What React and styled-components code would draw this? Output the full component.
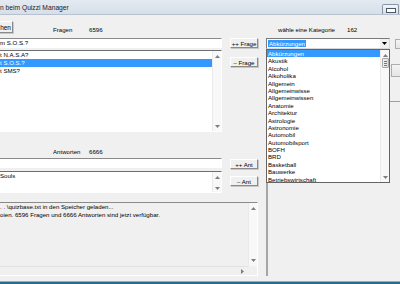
import React from 'react';
import styled, { createGlobalStyle, css } from 'styled-components';

const GlobalStyle = createGlobalStyle`
  html, body { margin: 0; padding: 0; background: #f0f0f0; }
  body { font-family: "Liberation Sans", Arial, sans-serif; }
  * { box-sizing: border-box; }
`;

const sunken = css`
  border: 1px solid;
  border-color: #8a8a8a #ffffff #ffffff #8a8a8a;
`;

const raised = css`
  border: 1px solid;
  border-color: #ffffff #8a8a8a #8a8a8a #ffffff;
  box-shadow: 1px 1px 0 #c8c8c8;
`;

const Window = styled.div`
  width: 400px;
  height: 284px;
  overflow: hidden;
  display: flex;
  flex-direction: column;
  background: #f0f0f0;
  color: #000;
  font-size: 6.1px;
`;

const TitleBar = styled.div`
  height: 15px;
  flex: none;
  display: flex;
  justify-content: space-between;
  align-items: flex-start;
  background: linear-gradient(#e4eaf1, #d6dfe9);
  border-bottom: 1px solid #b7c2ce;
`;

const Title = styled.div`
  font-size: 6.7px;
  line-height: 15px;
  color: #1a1a1a;
  white-space: nowrap;
`;

const MinButton = styled.div`
  margin-top: 4px;
  margin-right: 1px;
  width: 17px;
  height: 10px;
  border: 1px solid #8895a4;
  border-bottom: none;
  border-radius: 2px 2px 0 0;
  background: linear-gradient(#f2f5f8, #d7dee6);
  display: flex;
  align-items: center;
  justify-content: center;
  &::after {
    content: "";
    width: 8px;
    height: 3px;
    background: #fff;
    border: 1px solid #4d5866;
    margin-top: 1px;
  }
`;

const Client = styled.div`
  flex: 1;
  display: flex;
  padding-bottom: 5px;
  min-height: 0;
`;

const Taskbar = styled.div`
  height: 3px;
  flex: none;
  background: #2b6b8a;
  border-top: 1px solid #86b3c9;
`;

const MainArea = styled.div`
  width: 262px;
  margin-left: -4px;
  flex: none;
  display: flex;
  flex-direction: column;
`;

const HeaderRow = styled.div`
  height: ${p => p.$h ?? 23}px;
  padding-top: ${p => p.$pt ?? 6}px;
  display: flex;
  align-items: flex-start;
  flex: none;
`;

const HeaderButton = styled.div`
  ${raised};
  width: 17px;
  height: 12px;
  font-size: 6.5px;
  display: flex;
  align-items: center;
  justify-content: flex-end;
  padding-right: 1px;
  background: #f0f0f0;
`;

const Label = styled.div`
  margin-left: ${p => p.$ml}px;
  width: ${p => p.$w}px;
  margin-top: ${p => p.$mt ?? 5}px;
  line-height: 8px;
  white-space: nowrap;
  flex: none;
`;

const Count = styled.div`
  margin-top: ${p => p.$mt ?? 5}px;
  line-height: 8px;
`;

const Block = styled.div`
  display: grid;
  grid-template-columns: 226px 28px;
  column-gap: 8px;
  height: ${p => p.$h}px;
  flex: none;
`;

const Column = styled.div`
  display: flex;
  flex-direction: column;
  gap: ${p => p.$gap}px;
  padding-top: ${p => p.$pt || 0}px;
`;

const TextInput = styled.div`
  ${sunken};
  height: 10px;
  background: #fff;
  line-height: 8px;
  padding-left: 3px;
  white-space: nowrap;
  overflow: hidden;
  flex: none;
`;

const ListBox = styled.div`
  ${sunken};
  border-top-color: #6e6e6e;
  height: ${p => p.$h}px;
  background: #fff;
  display: flex;
  flex: none;
  overflow: hidden;
`;

const Items = styled.div`
  flex: 1;
  overflow: hidden;
`;

const Item = styled.div`
  height: ${p => p.$lh || 8}px;
  line-height: ${p => p.$lh || 8}px;
  padding-left: ${p => p.$pl ?? 3}px;
  white-space: nowrap;
  background: ${p => (p.$sel ? '#3399ff' : 'transparent')};
  color: ${p => (p.$sel ? '#fff' : '#000')};
`;

const VScroll = styled.div`
  width: 9px;
  flex: none;
  display: flex;
  flex-direction: column;
  align-items: center;
  justify-content: space-between;
  background: #f8f8f8;
  border-left: 1px solid #eaeaea;
  padding: ${p => p.$pad || '4px 0 3px'};
`;

const Thumb = styled.div`
  width: 7px;
  height: 10px;
  border: 1px solid #a6a6a6;
  border-radius: 1px;
  background: linear-gradient(90deg, #f2f2f2, #dcdcdc);
  display: flex;
  flex-direction: column;
  align-items: center;
  justify-content: center;
  gap: 1px;
  margin-top: 1px;
  & > i {
    display: block;
    width: 3px;
    height: 1px;
    background: #777;
  }
`;

const Spacer = styled.div`
  flex: 1;
`;

const ActionButton = styled.div`
  ${raised};
  height: 10px;
  font-size: 6.1px;
  display: flex;
  align-items: center;
  justify-content: center;
  background: #f0f0f0;
  white-space: nowrap;
`;

const LogBox = styled.div`
  margin-top: 9px;
  height: 74px;
  flex: none;
  ${sunken};
  border-top-color: #8a8a8a;
  background: #f0f0f0;
  display: grid;
  grid-template-columns: 1fr 9px;
  grid-template-rows: 1fr 9px;
`;

const LogText = styled.div`
  padding-left: 3px;
  line-height: 8px;
  white-space: nowrap;
  overflow: hidden;
`;

const HScroll = styled.div`
  border-top: 1px solid #e2e2e2;
  display: flex;
  justify-content: flex-end;
  align-items: center;
  padding-right: 4px;
`;

const Corner = styled.div`
  background: #f0f0f0;
`;

const RightPane = styled.div`
  margin-left: 8px;
  flex: 1;
  display: flex;
  flex-direction: column;
`;

const ComboRow = styled.div`
  display: flex;
  height: 11px;
  flex: none;
`;

const ComboWrap = styled.div`
  position: relative;
  width: 124px;
  flex: none;
`;

const Combo = styled.div`
  height: 11px;
  border: 1px solid;
  border-color: #7a7a7a #d8d8d8 #d8d8d8 #7a7a7a;
  background: #fff;
  display: flex;
  align-items: center;
  padding-left: 1px;
`;

const ComboText = styled.span`
  background: #3399ff;
  color: #fff;
  line-height: 7px;
  padding: 0 1px;
`;

const ComboArrow = styled.div`
  margin-left: auto;
  width: 9px;
  height: 9px;
  background: #f0f0f0;
  display: flex;
  align-items: center;
  justify-content: center;
`;

const Dropdown = styled.div`
  position: absolute;
  top: 11px;
  left: 0;
  width: 124px;
  height: 134px;
  border: 1px solid #646464;
  background: #fff;
  display: flex;
  z-index: 2;
`;

const RightStrip = styled.div`
  flex: 1;
  display: flex;
  flex-direction: column;
  padding-top: ${p => p.$pt || 0}px;
`;

const PartialButton = styled.div`
  margin-left: ${p => p.$ml}px;
  margin-top: ${p => p.$mt || 0}px;
  height: ${p => p.$h}px;
  border: 1px solid #adadad;
  border-right: none;
  background: linear-gradient(#f4f4f4, #e4e4e4);
  flex: none;
`;

const StripLine = styled.div`
  margin-top: 24px;
  height: 1px;
  background: #a0a0a0;
`;

const PanelRow = styled.div`
  flex: 1;
  display: flex;
`;

const Panel = styled.div`
  width: 124px;
  flex: none;
  border-left: 2px solid #a6a6a6;
`;

const Arrow = ({ dir, color = '#7d7d7d' }) => {
  if (dir === 'right') {
    return (
      <svg width="3" height="5" viewBox="0 0 3 5">
        <path d="M0 0L3 2.5L0 5Z" fill={color} />
      </svg>
    );
  }
  const d = dir === 'up' ? 'M0 3L2.5 0L5 3Z' : 'M0 0L2.5 3L5 0Z';
  return (
    <svg width="5" height="3" viewBox="0 0 5 3">
      <path d={d} fill={color} />
    </svg>
  );
};

const categories = [
  'Abkürzungen', 'Akustik', 'Alcohol', 'Alkoholika', 'Allgemein', 'Allgemeinwisse',
  'Allgemeinwissen', 'Anatomie', 'Architektur', 'Astrologie', 'Astronomie', 'Automobil',
  'Automobilsport', 'BOFH', 'BRD', 'Basketball', 'Bauwerke', 'Betriebswirtschaft',
];

export default function App() {
  return (
    <>
      <GlobalStyle />
      <Window>
        <TitleBar>
          <Title>n beim Quizzi Manager</Title>
          <MinButton />
        </TitleBar>
        <Client>
          <MainArea>
            <HeaderRow>
              <HeaderButton>hen</HeaderButton>
              <Label $ml={40} $w={36}>Fragen</Label>
              <Count>6596</Count>
            </HeaderRow>
            <Block $h={94}>
              <Column $gap={2}>
                <TextInput>m S.O.S.?</TextInput>
                <ListBox $h={82}>
                  <Items>
                    <Item>t N.A.S.A?</Item>
                    <Item $sel>t S.O.S.?</Item>
                    <Item>t SMS?</Item>
                  </Items>
                  <VScroll>
                    <Arrow dir="up" />
                    <Arrow dir="down" />
                  </VScroll>
                </ListBox>
              </Column>
              <Column $gap={9}>
                <ActionButton>++ Frage</ActionButton>
                <ActionButton>– Frage</ActionButton>
              </Column>
            </Block>
            <HeaderRow $pt={0} $h={26}>
              <Label $ml={57} $w={36} $mt={16}>Antworten</Label>
              <Count $mt={16}>6666</Count>
            </HeaderRow>
            <Block $h={35}>
              <Column $gap={3}>
                <TextInput />
                <ListBox $h={22}>
                  <Items>
                    <Item>Souls</Item>
                  </Items>
                  <VScroll $pad="4px 0 2px">
                    <Arrow dir="up" />
                    <Arrow dir="down" />
                  </VScroll>
                </ListBox>
              </Column>
              <Column $gap={7} $pt={1}>
                <ActionButton>++ Ant</ActionButton>
                <ActionButton>– Ant</ActionButton>
              </Column>
            </Block>
            <LogBox>
              <LogText>
                <div>{'. . \\quizbase.txt in den Speicher geladen...'}</div>
                <div>oien. 6596 Fragen und 6666 Antworten sind jetzt verfügbar.</div>
              </LogText>
              <VScroll $pad="4px 0 4px">
                <Arrow dir="up" />
                <Arrow dir="down" />
              </VScroll>
              <HScroll>
                <Arrow dir="right" />
              </HScroll>
              <Corner />
            </LogBox>
          </MainArea>
          <RightPane>
            <HeaderRow>
              <Label $ml={12} $w={69}>wähle eine Kategorie</Label>
              <Count>162</Count>
            </HeaderRow>
            <ComboRow>
              <ComboWrap>
                <Combo>
                  <ComboText>Abkürzungen</ComboText>
                  <ComboArrow>
                    <Arrow dir="down" color="#000" />
                  </ComboArrow>
                </Combo>
                <Dropdown>
                  <Items>
                    {categories.map((c, i) => (
                      <Item key={c} $sel={i === 0} $lh={7.4} $pl={1}>
                        {c}
                      </Item>
                    ))}
                  </Items>
                  <VScroll $pad="4px 0 3px">
                    <Arrow dir="up" />
                    <Thumb>
                      <i />
                      <i />
                      <i />
                    </Thumb>
                    <Spacer />
                    <Arrow dir="down" />
                  </VScroll>
                </Dropdown>
              </ComboWrap>
              <RightStrip $pt={1}>
                <PartialButton $ml={5} $h={10} />
              </RightStrip>
            </ComboRow>
            <PanelRow>
              <Panel />
              <RightStrip>
                <PartialButton $ml={1} $mt={15} $h={13} />
                <StripLine />
              </RightStrip>
            </PanelRow>
          </RightPane>
        </Client>
        <Taskbar />
      </Window>
    </>
  );
}
